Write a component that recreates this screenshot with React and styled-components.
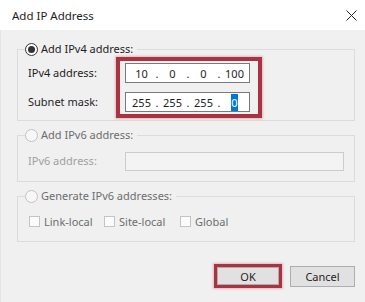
import React from 'react';
import styled, { createGlobalStyle } from 'styled-components';

const GlobalStyle = createGlobalStyle`
  html, body {
    margin: 0;
    padding: 0;
    background: #f0f0f0;
  }
  body {
    font-family: "Noto Sans", "Liberation Sans", sans-serif;
    font-size: 11px;
    color: #1e1e1e;
  }
`;

const Window = styled.div`
  width: 365px;
  height: 302px;
  display: flex;
  flex-direction: column;
  background: #f0f0f0;
  overflow: hidden;
`;

const TitleBar = styled.div`
  height: 30px;
  flex: none;
  background: #fff;
  display: flex;
  align-items: center;
  justify-content: space-between;
  padding: 0 8px 0 12px;
`;

const Title = styled.span`
  font-size: 11.5px;
  color: #1e1e1e;
`;

const CloseButton = styled.span`
  width: 12px;
  height: 12px;
  display: flex;
  align-items: center;
  justify-content: center;
`;

const Body = styled.div`
  flex: 1;
  display: flex;
  flex-direction: column;
  gap: 7px;
  padding: 12px 10px 0 16px;
  border-left: 1px solid #e4e4e4;
`;

const Group = styled.fieldset`
  margin: 0;
  border: 1px solid #dcdcdc;
  padding: ${p => p.$pad || '1px 10px 2px 10px'};
  min-width: 0;
`;

const Legend = styled.legend`
  display: flex;
  align-items: center;
  gap: 3px;
  height: 14px;
  line-height: 14px;
  margin-left: -3px;
  padding: 0 4px 0 0;
  color: ${p => (p.$disabled ? '#6d6d6d' : '#1e1e1e')};
`;

const RadioCircle = styled.span`
  width: 11px;
  height: 11px;
  border-radius: 50%;
  border: 1px solid ${p => (p.$disabled ? '#c2c2c2' : '#333')};
  background: ${p => (p.$disabled ? '#f7f7f7' : '#fff')};
  display: flex;
  align-items: center;
  justify-content: center;
  &::after {
    content: '';
    width: 7px;
    height: 7px;
    border-radius: 50%;
    background: #333;
    display: ${p => (p.$checked ? 'block' : 'none')};
  }
`;

const FieldGrid = styled.div`
  display: grid;
  grid-template-columns: ${p => p.$cols};
  align-items: center;
`;

const LabelColumn = styled.div`
  display: flex;
  flex-direction: column;
  justify-content: space-between;
  padding: 6px 0 6px;
  height: 100%;
  box-sizing: border-box;
`;

const FieldLabel = styled.span`
  line-height: 20px;
  color: ${p => (p.$disabled ? '#a0a0a0' : '#1e1e1e')};
`;

const Marker = styled.div`
  border: ${p => p.$width || 4}px solid #a93340;
  box-shadow: 0 0 2px 1px rgba(214, 120, 130, 0.45);
  padding: ${p => p.$pad || '2px 8px 2px 5px'};
  display: flex;
  flex-direction: column;
  gap: 9px;
`;

const IpField = styled.div`
  height: 20px;
  box-sizing: border-box;
  border: 1px solid #7a7a7a;
  background: #fff;
  display: flex;
  align-items: center;
  padding-left: 3px;
`;

const Segment = styled.span`
  width: 25px;
  text-align: center;
`;

const Dot = styled.span`
  width: 6px;
  text-align: center;
`;

const Selected = styled.span`
  background: #0078d7;
  color: #fff;
  padding: 1px 0;
`;

const TextField = styled.div`
  height: 19px;
  box-sizing: border-box;
  border: 1px solid #cccccc;
  background: #f3f3f3;
`;

const CheckRow = styled.div`
  display: grid;
  grid-template-columns: 75px 76px auto;
  padding-left: 1px;
  height: 16px;
  align-items: center;
`;

const CheckItem = styled.label`
  display: flex;
  align-items: center;
  gap: 4px;
  color: #6d6d6d;
`;

const CheckBox = styled.span`
  width: 11px;
  height: 11px;
  box-sizing: border-box;
  border: 1px solid #c4c4c4;
  background: #fbfbfb;
`;

const ButtonRow = styled.div`
  display: flex;
  justify-content: flex-end;
  align-items: center;
  gap: 8px;
  margin-top: 15px;
`;

const Button = styled.button`
  font: inherit;
  color: #1e1e1e;
  width: ${p => p.$w || 65}px;
  height: ${p => p.$h || 21}px;
  padding: 0;
  background: #e1e1e1;
  border: 1px solid #adadad;
  box-sizing: border-box;
`;

const IpBox = ({ segments, selected }) => (
  <IpField>
    {segments.map((s, i) => (
      <React.Fragment key={i}>
        {i > 0 && <Dot>.</Dot>}
        <Segment>{i === selected ? <Selected>{s}</Selected> : s}</Segment>
      </React.Fragment>
    ))}
  </IpField>
);

export default function App() {
  return (
    <>
      <GlobalStyle />
      <Window>
        <TitleBar>
          <Title>Add IP Address</Title>
          <CloseButton>
            <svg width="11" height="11" viewBox="0 0 11 11">
              <path d="M0.5 0.5L10.5 10.5M10.5 0.5L0.5 10.5" stroke="#222" strokeWidth="1" />
            </svg>
          </CloseButton>
        </TitleBar>
        <Body>
          <Group>
            <Legend>
              <RadioCircle $checked />
              Add IPv4 address:
            </Legend>
            <FieldGrid $cols="88px 146px">
              <LabelColumn>
                <FieldLabel>IPv4 address:</FieldLabel>
                <FieldLabel>Subnet mask:</FieldLabel>
              </LabelColumn>
              <Marker>
                <IpBox segments={['10', '0', '0', '100']} />
                <IpBox segments={['255', '255', '255', '0']} selected={3} />
              </Marker>
            </FieldGrid>
          </Group>

          <Group $pad="9px 10px 10px 10px">
            <Legend $disabled>
              <RadioCircle $disabled />
              Add IPv6 address:
            </Legend>
            <FieldGrid $cols="97px 1fr">
              <FieldLabel $disabled>IPv6 address:</FieldLabel>
              <TextField />
            </FieldGrid>
          </Group>

          <Group $pad="10px 10px 12px 10px">
            <Legend $disabled>
              <RadioCircle $disabled />
              Generate IPv6 addresses:
            </Legend>
            <CheckRow>
              <CheckItem><CheckBox />Link-local</CheckItem>
              <CheckItem><CheckBox />Site-local</CheckItem>
              <CheckItem><CheckBox />Global</CheckItem>
            </CheckRow>
          </Group>

          <ButtonRow>
            <Marker $width={3} $pad="0">
              <Button $w={62} $h={18}>OK</Button>
            </Marker>
            <Button>Cancel</Button>
          </ButtonRow>
        </Body>
      </Window>
    </>
  );
}
